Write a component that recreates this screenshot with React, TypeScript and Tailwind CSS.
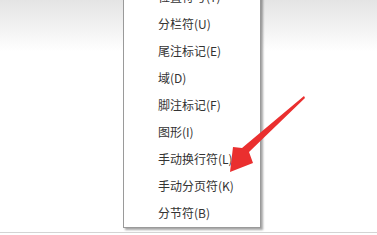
const items = [
  "位置符号(Y)",
  "分栏符(U)",
  "尾注标记(E)",
  "域(D)",
  "脚注标记(F)",
  "图形(I)",
  "手动换行符(L)",
  "手动分页符(K)",
  "分节符(B)",
];

export default function App() {
  return (
    <div
      className="relative w-[377px] h-[235px] overflow-hidden bg-white"
      style={{ fontFamily: '"Noto Sans CJK SC", "Noto Sans", sans-serif' }}
    >
      {/* page backdrop */}
      <div className="flex flex-col h-full">
        <div className="h-[52px] bg-gradient-to-b from-[#e4e4e4] to-white" />
        <div className="flex-1" />
        <div className="h-[1px] bg-[#d4d4d4] mb-[2px]" />
      </div>

      {/* context menu */}
      <div className="absolute left-[123px] top-[-20px] w-[138px] bg-white border border-[#9a9a9a] pt-[2px] pb-[1px] shadow-[2px_2px_2px_rgba(0,0,0,0.35)]">
        {items.map((label) => (
          <div
            key={label}
            className="h-[27px] flex items-center pl-[34px] text-[12px] text-[#333333] leading-none"
          >
            {label}
          </div>
        ))}
      </div>

      {/* red annotation arrow */}
      <svg
        className="absolute left-0 top-0 pointer-events-none"
        width="377"
        height="235"
        viewBox="0 0 377 235"
      >
        <polygon
          points="304,96 305,98 249,152 253,163 230,172 233,147 242,148"
          fill="#ea2f2f"
        />
      </svg>
    </div>
  );
}
